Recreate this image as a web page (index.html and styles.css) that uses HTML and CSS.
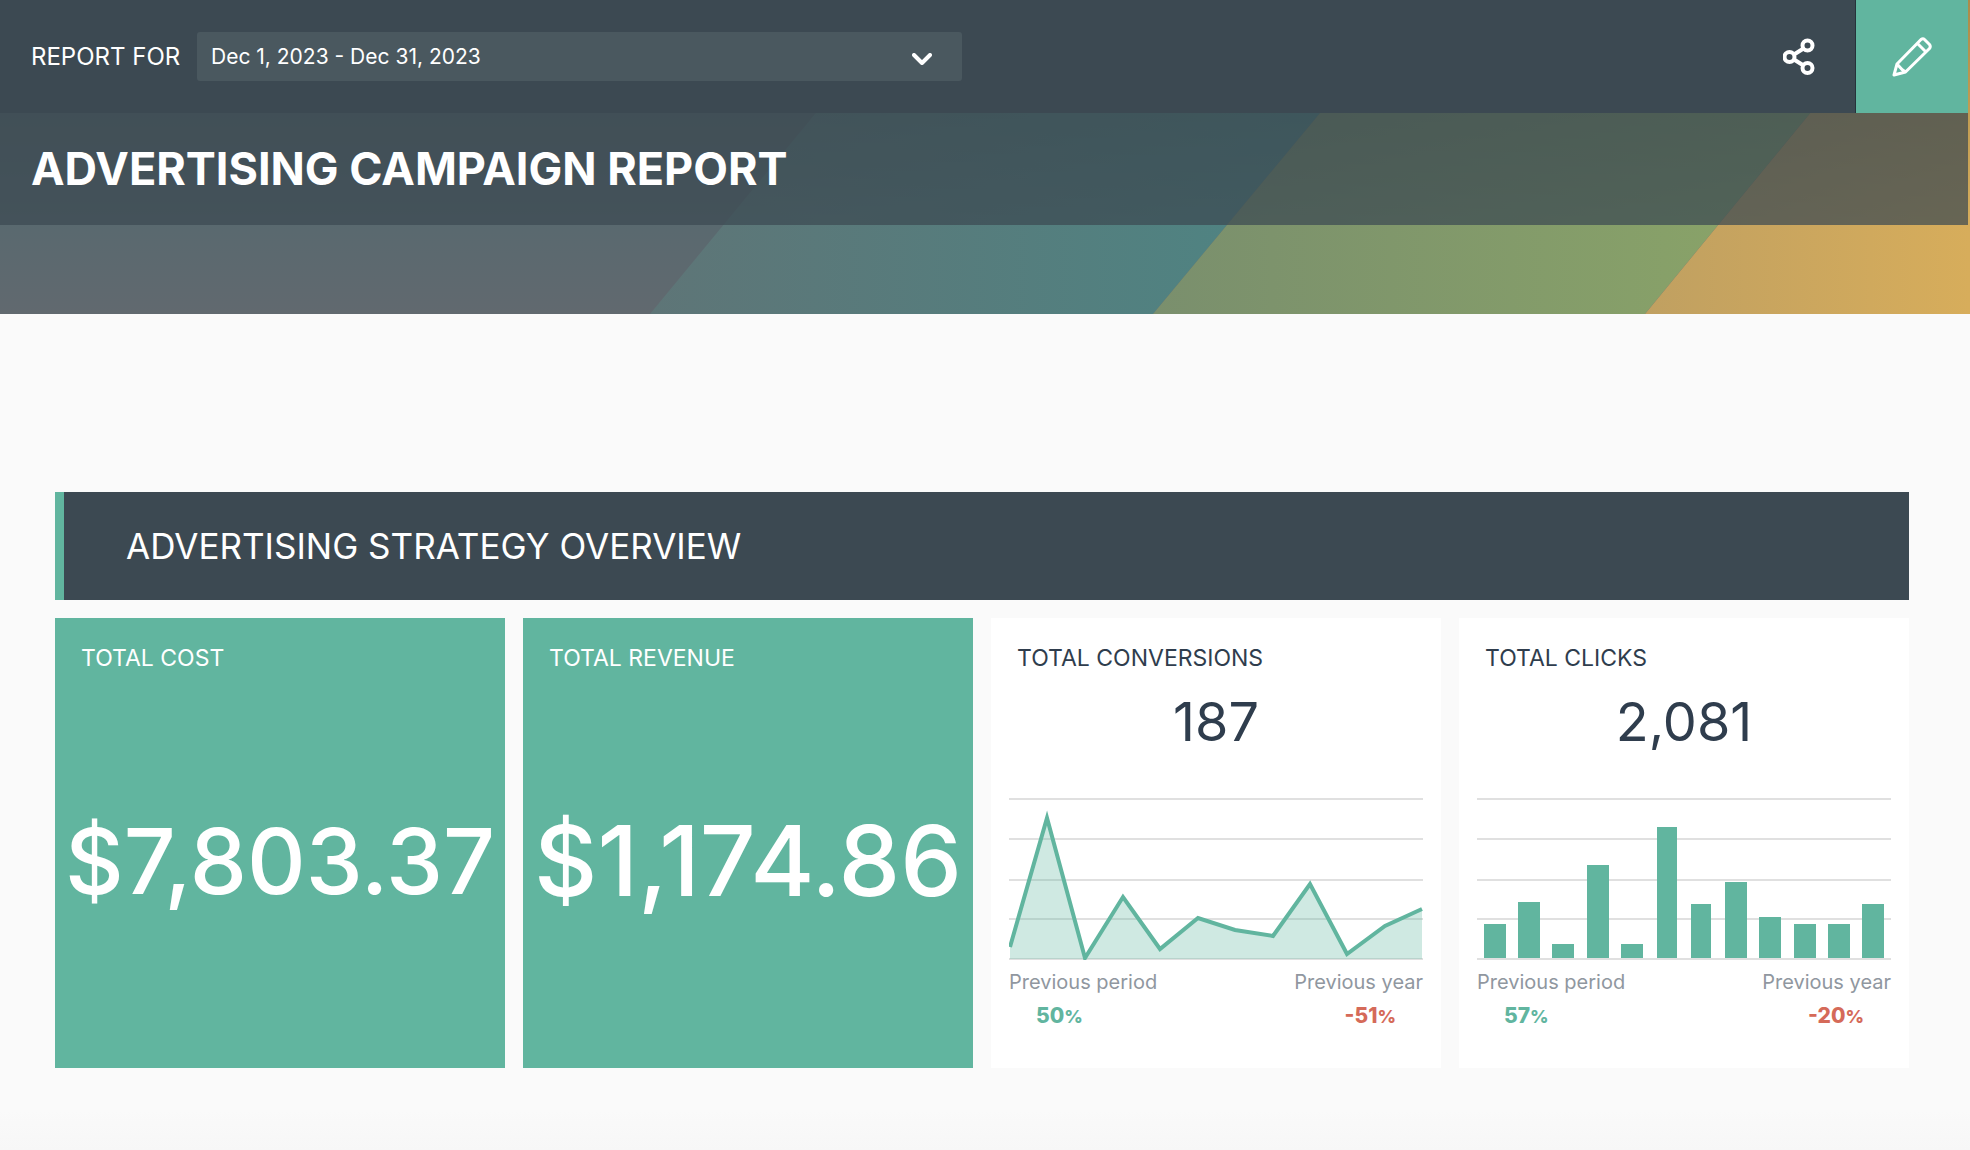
FILE: index.html
```html
<!DOCTYPE html>
<html lang="en">
<head>
<meta charset="utf-8">
<title>Advertising Campaign Report</title>
<link rel="stylesheet" href="styles.css">
</head>
<body>
<header class="banner">
  <svg class="banner-art" viewBox="0 0 1970 314" preserveAspectRatio="none" aria-hidden="true">
    <defs>
      <linearGradient id="slate" x1="0" y1="0" x2="0" y2="1"><stop offset=".7" stop-color="#59696f"/><stop offset="1" stop-color="#61696f"/></linearGradient>
      <linearGradient id="teal"><stop offset="0" stop-color="#5e7577"/><stop offset="1" stop-color="#4b8785"/></linearGradient>
      <linearGradient id="green"><stop offset="0" stop-color="#7a8f6d"/><stop offset="1" stop-color="#8da867"/></linearGradient>
      <linearGradient id="amber"><stop offset="0" stop-color="#c0a061"/><stop offset="1" stop-color="#d7ad5b"/></linearGradient>
      <linearGradient id="shade" x1="0" y1="0" x2="0" y2="1"><stop offset="0" stop-color="#000" stop-opacity=".2"/><stop offset=".7" stop-color="#000" stop-opacity="0"/></linearGradient>
    </defs>
    <rect width="1970" height="314" fill="url(#slate)"/>
    <path d="M909 0H1414L1153 314H650Z" fill="url(#teal)"/>
    <path d="M1414 0H1903L1645 314H1153Z" fill="url(#green)"/>
    <path d="M1903 0H1970V314H1645Z" fill="url(#amber)"/>
    <rect width="1970" height="314" fill="url(#shade)"/>
  </svg>
  <div class="toolbar">
    <label class="range-label" for="range">REPORT FOR</label>
    <div class="range">
      <select id="range" class="range-select"><option>Dec 1, 2023 - Dec 31, 2023</option></select>
      <svg class="chevron" viewBox="0 0 20 12" aria-hidden="true"><path d="M2 2l8 8 8-8"/></svg>
    </div>
    <button class="tool share" type="button" aria-label="Share">
      <svg width="34" height="38" viewBox="0 0 34 38" aria-hidden="true"><path d="M11 16.500l9.500-6M11 21.500l9.500 6"/><circle cx="6.500" cy="19" r="5"/><circle cx="24.500" cy="7.500" r="5"/><circle cx="24.500" cy="30" r="5"/></svg>
    </button>
    <button class="tool edit" type="button" aria-label="Edit">
      <svg width="40" height="40" viewBox="0 0 40 40" aria-hidden="true"><path d="M2 38L5 27 29 2.500q2-1.500 3.500 0L37.500 7.500q1.500 2 0 4L13.500 35zM5 27l5 5.500L13.500 35M25.500 6.500l8.500 8.500"/></svg>
    </button>
  </div>
  <div class="title-band"><h1 class="title">ADVERTISING CAMPAIGN REPORT</h1></div>
</header>
<main class="report">
  <h2 class="section-title">ADVERTISING STRATEGY OVERVIEW</h2>
  <div class="cards">
    <section class="card card-solid">
      <h3 class="card-label">TOTAL COST</h3>
      <p class="big-value">$7,803.37</p>
    </section>
    <section class="card card-solid">
      <h3 class="card-label">TOTAL REVENUE</h3>
      <p class="big-value big-value-narrow">$1,174.86</p>
    </section>
    <section class="card">
      <h3 class="card-label">TOTAL CONVERSIONS</h3>
      <p class="value">187</p>
      <svg class="chart" viewBox="0 0 414 162" role="img" aria-label="Conversions trend">
        <path class="grid" d="M0 1H414M0 41H414M0 82H414M0 121H414M0 161H414"/>
        <path class="area" d="M1 149L38 20 76 160 114 99 151 151 189 120 226 132 264 138 301 86 338 156 376 128 413 111V161H1Z"/>
        <path class="line" d="M1 149L38 20 76 160 114 99 151 151 189 120 226 132 264 138 301 86 338 156 376 128 413 111"/>
      </svg>
      <div class="compare">
        <div><p class="compare-label">Previous period</p><p class="delta up">50<small>%</small></p></div>
        <div><p class="compare-label">Previous year</p><p class="delta down">-51<small>%</small></p></div>
      </div>
    </section>
    <section class="card">
      <h3 class="card-label">TOTAL CLICKS</h3>
      <p class="value">2,081</p>
      <svg class="chart" viewBox="0 0 414 162" role="img" aria-label="Clicks by period">
        <path class="grid" d="M0 1H414M0 41H414M0 82H414M0 121H414M0 161H414"/>
        <path class="bars" d="M7 126h22v34H7zM41 104h22v56H41zM75 146h22v14H75zM110 67h22v93h-22zM144 146h22v14h-22zM180 29h20v131h-20zM214 106h20v54h-20zM248 84h22v76h-22zM282 119h22v41h-22zM317 126h22v34h-22zM351 126h22v34h-22zM385 106h22v54h-22z"/>
      </svg>
      <div class="compare">
        <div><p class="compare-label">Previous period</p><p class="delta up">57<small>%</small></p></div>
        <div><p class="compare-label">Previous year</p><p class="delta down">-20<small>%</small></p></div>
      </div>
    </section>
  </div>
</main>
</body>
</html>
```
FILE: styles.css
```css
* { box-sizing: border-box; }
body {
  margin: 0;
  min-height: 100vh;
  background: linear-gradient(to top, #f7f7f7, #fafafa 40px);
  color: #2f3d4d;
  font-family: Inter, "Liberation Sans", sans-serif;
}
h1, h2, h3, p { margin: 0; }

.banner { position: relative; padding: 0 2px 89px 0; color: #fff; }
.banner-art { position: absolute; inset: 0; z-index: -1; width: 100%; height: 100%; }
.toolbar { display: flex; align-items: center; height: 113px; padding-left: 31px; background: #3c4952; }
.range-label { font-size: 24px; line-height: 28px; width: 166px; flex: none; }
.range { position: relative; flex: 0 1 765px; height: 49px; }
.range-select {
  appearance: none;
  width: 100%;
  height: 100%;
  padding: 0 60px 0 14px;
  border: 0;
  border-radius: 3px;
  background: #4a585f;
  color: #fff;
  font: inherit;
  font-size: 21px;
}
.chevron { position: absolute; right: 30px; top: 21px; width: 20px; height: 12px; pointer-events: none; }
.chevron path { fill: none; stroke: #fff; stroke-width: 4; stroke-linecap: round; stroke-linejoin: round; }
.tool {
  display: flex;
  align-items: center;
  justify-content: center;
  width: 112px;
  height: 100%;
  padding: 0;
  border: 0;
  background: none;
}
.tool svg { fill: none; stroke: #fff; stroke-width: 3; stroke-linejoin: round; }
.share { margin-left: auto; border-right: 1px solid #26323a; }
.tool.share svg { stroke-width: 4; }
.edit { background: #61b59f; }
.title-band { display: flex; align-items: center; height: 112px; padding-left: 31px; background: rgba(60, 73, 82, 0.72); }
.title { font-size: 45px; line-height: 48px; font-weight: 700; }

.report { padding: 178px 61px 82px 55px; }
.section-title {
  padding: 34px 62px;
  border-left: 9px solid #61b59f;
  background: #3c4952;
  color: #fff;
  font-size: 35px;
  line-height: 40px;
  font-weight: 400;
}
.cards { display: grid; grid-template-columns: repeat(4, 1fr); gap: 18px; margin-top: 18px; }
.card { display: flex; flex-direction: column; min-height: 450px; padding: 26px 18px; background: #fff; }
.card-solid { background: #61b59f; color: #fff; }
.card-label { padding-left: 8px; font-size: 23px; line-height: 28px; font-weight: 400; }
.big-value {
  margin: auto -18px;
  padding-top: 8px;
  font-size: 91px;
  line-height: 110px;
  font-weight: 500;
  text-align: center;
}
.big-value-narrow { font-size: 98px; }
.value { margin-top: 18px; font-size: 54px; line-height: 64px; text-align: center; }
.chart { display: block; width: 100%; margin-top: 44px; }
.grid { fill: none; stroke: #e0e0e0; stroke-width: 2; }
.area { fill: #61b59f; fill-opacity: 0.3; }
.line { fill: none; stroke: #61b59f; stroke-width: 4; }
.bars { fill: #61b59f; }
.compare { display: flex; justify-content: space-between; margin-top: 9px; }
.compare-label { color: #9097a0; font-size: 20px; line-height: 26px; }
.delta { margin-top: 7px; padding: 0 27px; font-size: 21px; line-height: 28px; font-weight: 800; }
.delta small { font-size: 18px; }
.up { color: #61b59f; }
.down { color: #d56a59; text-align: right; }
```
